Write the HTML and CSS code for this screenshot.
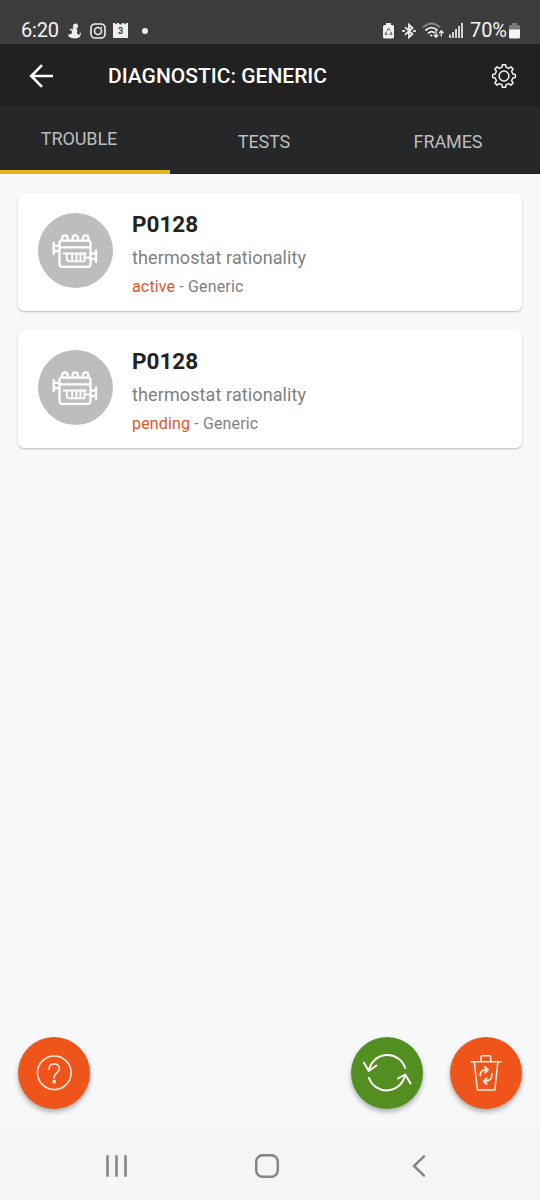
FILE: index.html
```html
<!DOCTYPE html>
<html lang="en">
<head>
<meta charset="utf-8">
<title>Diagnostic: Generic</title>
<link rel="stylesheet" href="styles.css">
</head>
<body>
<svg class="defs" width="0" height="0">
  <symbol id="engine" viewBox="0 0 46 36">
    <g fill="none" stroke="#fff" stroke-width="2.3" stroke-linejoin="round" stroke-linecap="round">
      <path d="M10 7.600H36Q38.500 7.600 38.500 10V31.300Q38.500 33.800 36 33.800H10Q7.500 33.800 7.500 31.300V10Q7.500 7.600 10 7.600ZM7.500 14.400H38.500"/>
      <path d="M10.200 7V5a2.700 2.700 0 0 1 5.400 0V7M20.600 7V5a2.700 2.700 0 0 1 5.400 0V7M31 7V5a2.700 2.700 0 0 1 5.400 0V7"/>
      <path d="M1.700 10V21M1.700 12.800H6.500M1.700 18H6.500M44 17.500V29M39.500 20.500H44M39.500 26H44"/>
      <path d="M11.800 20.500H33.800M14.800 21V25.500Q14.800 28.400 17.500 28.400H32.500V21M20.200 21V28M24.400 21V28M28.500 21V28M33 24.500H38" stroke-width="1.900"/>
    </g>
  </symbol>
</svg>
<div class="screen">
  <div class="status">
    <span class="clock">6:20</span>
    <svg class="s-baby" width="13" height="16" viewBox="0 0 13 16" fill="#eee"><circle cx="7.500" cy="3" r="2.500"/><path d="M4.500 4.500L8.800 5.500Q10 8 8.800 10L11 12.500L12 9.500L13 10L12 13.800Q10 15.500 7 15.500Q3 15.500 .5 13.500V11.500L4 10.500L3.800 8L1.500 6.500L2.200 5.500L5 6.800Z"/></svg>
    <svg class="s-insta" width="16" height="16" viewBox="0 0 16 16" fill="none" stroke="#eee" stroke-width="1.600"><rect x="1" y="1" width="14" height="14" rx="4"/><circle cx="8" cy="8" r="3.500"/><circle cx="11.700" cy="4.200" r=".8" fill="#eee" stroke="none"/></svg>
    <span class="s-cal">3</span>
    <span class="s-dot"></span>
    <svg class="s-saver" width="11" height="16" viewBox="0 0 11 16"><path d="M3 0H8V2H9.500Q11 2 11 3.500V14Q11 15.500 9.500 15.500H1.500Q0 15.500 0 14V3.500Q0 2 1.500 2H3Z" fill="#eee"/><path d="M4 7.600L5.500 5.200L7 7.600M7.800 8.800L8.900 11.300H6.500M4.700 11.300H2.100L3.300 8.800" fill="none" stroke="#3c3c3c" stroke-width=".9"/></svg>
    <svg class="s-bt" width="14" height="16" viewBox="0 0 14 16" fill="none" stroke="#eee" stroke-width="1.800"><path d="M3 4.200L10.500 11L7 14.300V1.700L10.500 5L3 11.800"/><path d="M.2 8H2.800M11.200 8H13.800" stroke-width="2.200"/></svg>
    <svg class="s-wifi" width="22" height="17" viewBox="0 0 22 17" fill="none" stroke-width="1.800" stroke-linecap="round"><path d="M1.500 5Q9.500-2 17.500 5" stroke="#858585"/><path d="M4 8Q9.500 3.300 15 8M6.500 11Q9.500 8.500 12 10.500" stroke="#eee"/><circle cx="9.300" cy="13.500" r="1.100" fill="#eee"/><path d="M14 9V15M12.200 13.200L14 15.200L15.800 13.200M19.300 14V9M17.500 10.800L19.300 8.800L21.100 10.800" stroke="#eee" stroke-width="1.300"/></svg>
    <svg class="s-signal" width="14" height="15" viewBox="0 0 14 15" stroke="#eee" stroke-width="1.700"><path d="M1 11.500V15M4 9V15M7 6V15M10 3V15M13 0V15"/></svg>
    <span class="percent">70%</span>
    <svg class="s-batt" width="11" height="16" viewBox="0 0 11 16"><path d="M3 0H8V2H9.500Q11 2 11 3.500V7H0V3.500Q0 2 1.500 2H3Z" fill="#7b7b7b"/><path d="M0 6.500H11V14Q11 15.500 9.500 15.500H1.500Q0 15.500 0 14Z" fill="#f5f5f5"/></svg>
  </div>

  <header class="appbar">
    <svg class="back" width="26" height="26" viewBox="0 0 26 26" fill="none" stroke="#fff" stroke-width="2.600"><path d="M25 13H3M14 2.200L3.200 13L14 23.800"/></svg>
    <h1 class="title">DIAGNOSTIC: GENERIC</h1>
    <svg class="gear" width="26" height="26" viewBox="-13 -13 26 26" fill="none" stroke="#eee" stroke-width="1.500" stroke-linejoin="round"><path d="M-2-8.800L-1.600-11.300H1.600L2-8.800L4.800-7.600L6.900-9.100L9.100-6.900L7.600-4.800L8.800-2L11.300-1.600V1.600L8.800 2L7.600 4.800L9.100 6.900L6.900 9.100L4.800 7.600L2 8.800L1.600 11.300H-1.600L-2 8.800L-4.800 7.600L-6.900 9.100L-9.100 6.900L-7.600 4.800L-8.800 2L-11.300 1.600V-1.600L-8.800-2L-7.600-4.800L-9.100-6.900L-6.900-9.100L-4.800-7.600Z"/><circle r="4.900"/></svg>
  </header>

  <nav class="tabs">
    <div class="tab tab-active">TROUBLE</div>
    <div class="tab">TESTS</div>
    <div class="tab">FRAMES</div>
  </nav>

  <main class="content">
    <article class="card">
      <div class="badge"><svg width="46" height="36"><use href="#engine"/></svg></div>
      <div class="info">
        <div class="code">P0128</div>
        <div class="desc">thermostat rationality</div>
        <div class="state"><span class="hot">active</span> - Generic</div>
      </div>
    </article>
    <article class="card">
      <div class="badge"><svg width="46" height="36"><use href="#engine"/></svg></div>
      <div class="info">
        <div class="code">P0128</div>
        <div class="desc">thermostat rationality</div>
        <div class="state"><span class="hot">pending</span> - Generic</div>
      </div>
    </article>
  </main>

  <div class="actions">
    <div class="fab help"><svg width="72" height="72" viewBox="0 0 72 72" fill="none" stroke="#ffe9d8" stroke-width="1.600" stroke-linecap="round"><circle cx="36.300" cy="35.800" r="16.800"/><path d="M31.200 32V31.500Q31.200 27 36.200 27Q41.300 27 41.300 31.700Q41.300 34 38.500 36.200Q36.200 38 36.200 41"/><circle cx="36.200" cy="44.700" r="1.100" fill="#ffe9d8"/></svg></div>
    <div class="fab green"><svg width="72" height="72" viewBox="0 0 72 72" fill="none" stroke="#fff" stroke-width="2" stroke-linecap="round" stroke-linejoin="round"><path d="M54.200 31A18.700 18.700 0 0 0 18 33.500M12.800 25.500L17.800 34L25.500 28.500M18 41A18.700 18.700 0 0 0 54 38M47 41.500L54.200 37.500L59.500 46.500"/></svg></div>
    <div class="fab"><svg width="72" height="72" viewBox="0 0 72 72" fill="none" stroke="#ffe9d8" stroke-width="1.600" stroke-linecap="round" stroke-linejoin="round"><path d="M21 24.800H51M31 24.500V20.500Q31 18.800 32.700 18.800H39Q40.700 18.800 40.700 20.500V24.500M24.300 25.500L27.500 53H44.800L47.800 25.500"/><path d="M30.200 38.500Q30.200 32.500 37 32.500M34.800 30L38 32.500L35.300 35.500M42 37Q42.300 44 34.500 44.300M36.700 41.500L33.500 44.300L36.700 47" stroke-width="1.900"/></svg></div>
  </div>

  <footer class="navbar">
    <svg class="n-recent" width="24" height="24" viewBox="0 0 24 24" stroke="#858585" stroke-width="2.600" stroke-linecap="round"><path d="M2.500 2.300V21.700M11.500 2.300V21.700M20.500 2.300V21.700"/></svg>
    <svg class="n-home" width="26" height="26" viewBox="0 0 26 26" fill="none" stroke="#858585" stroke-width="2.500"><rect x="2.200" y="2.200" width="21.600" height="21.600" rx="6.500"/></svg>
    <svg class="n-back" width="16" height="24" viewBox="0 0 16 24" fill="none" stroke="#858585" stroke-width="2.500" stroke-linecap="round"><path d="M13 2.300L3 12L13 21.700"/></svg>
  </footer>
</div>
</body>
</html>
```
FILE: styles.css
```css
body { margin: 0; }
.defs { display: block; }
.screen {
  width: 540px;
  height: 1200px;
  display: flex;
  flex-direction: column;
  background: #f6f8fa;
  font-family: Roboto, "Noto Sans", sans-serif;
  overflow: hidden;
}
svg { display: block; flex: none; }

.status {
  display: flex;
  align-items: center;
  box-sizing: border-box;
  height: 44px;
  padding: 17px 20px 0 21px;
  background: #3c3c3c;
  color: #f5f5f5;
  font-size: 20px;
  line-height: 27px;
}
.clock { width: 47px; letter-spacing: -0.2px; }
.s-insta { margin-left: 9px; }
.s-cal {
  margin-left: 7px;
  width: 15px;
  height: 15px;
  background: #eee;
  color: #3c3c3c;
  font-size: 9px;
  font-weight: 700;
  line-height: 17px;
  text-align: center;
  clip-path: polygon(0 0, 12% 0, 20% 10%, 28% 0, 38% 0, 46% 10%, 54% 10%, 62% 0, 72% 0, 80% 10%, 88% 0, 100% 0, 100% 100%, 0 100%);
}
.s-dot {
  width: 6px;
  height: 6px;
  margin-left: 14px;
  border-radius: 50%;
  background: #eee;
}
.s-saver { margin-left: auto; }
.s-bt { margin-left: 8px; }
.s-wifi { margin-left: 6px; }
.s-signal { margin-left: 5px; }
.percent { margin-left: 7px; width: 39px; letter-spacing: -0.1px; white-space: nowrap; }

.appbar {
  display: flex;
  align-items: center;
  box-sizing: border-box;
  height: 63px;
  padding: 0 23px 0 28px;
  background: #212121;
}
.title {
  flex: 1;
  margin: 1px 0 0 54px;
  color: #fff;
  font-size: 21px;
  line-height: 28px;
  font-weight: 500;
}

.tabs {
  display: grid;
  grid-template-columns: 170px 188px 182px;
  height: 67px;
  background: #262729;
  color: #bdbdbd;
  font-size: 18px;
  line-height: 24px;
  letter-spacing: -0.1px;
}
.tab {
  display: flex;
  align-items: center;
  justify-content: center;
  box-sizing: border-box;
  padding-top: 3px;
  border-bottom: 1px solid #1c1d1e;
}
.tab:last-child { padding-right: 2px; }
.tab-active {
  border-bottom: 4px solid #e3b417;
  padding: 0 12px 0 0;
}

.content {
  display: flex;
  flex-direction: column;
  flex: 1;
  gap: 19px;
  padding: 19px 18px 0;
}
.card {
  display: flex;
  box-sizing: border-box;
  height: 118px;
  padding: 20px 20px 0 19.500px;
  border-radius: 6px;
  background: #fff;
  box-shadow: 0 1px 2px rgba(0, 0, 0, 0.25);
}
.badge {
  display: flex;
  align-items: center;
  justify-content: center;
  width: 75px;
  height: 75px;
  border-radius: 50%;
  background: #bdbdbd;
}
.info { margin-left: 19.500px; color: #808080; }
.code {
  margin-top: -1px;
  color: #222;
  font-size: 22.500px;
  font-weight: 700;
  line-height: 24px;
}
.desc { margin-top: 10px; font-size: 18px; line-height: 24px; letter-spacing: 0.110px; }
.state { margin-top: 6px; font-size: 16px; line-height: 22px; letter-spacing: 0.150px; }
.hot { color: #df5527; }

.actions {
  display: flex;
  gap: 27px;
  padding: 0 18px 19px;
}
.fab {
  width: 72px;
  height: 72px;
  border-radius: 50%;
  background: #ef541b;
  box-shadow: 0 3px 5px rgba(0, 0, 0, 0.3);
}
.help { margin-right: auto; }
.green { background: #528e20; }

.navbar {
  display: flex;
  align-items: center;
  height: 72px;
  padding: 4px 0 0;
  box-sizing: border-box;
  background: #f5f5f5;
}
.n-recent { margin-left: 105px; }
.n-home { margin-left: 125px; }
.n-back { margin-left: 131px; }
```
